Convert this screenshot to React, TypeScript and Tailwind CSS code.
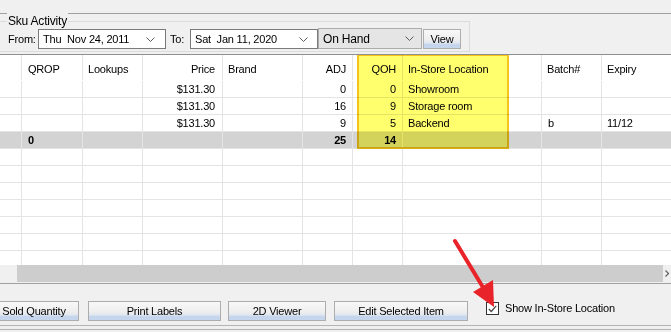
import React from "react";

type Row = {
  qrop?: string;
  price?: string;
  adj?: string;
  qoh?: string;
  loc?: string;
  batch?: string;
  expiry?: string;
  total?: boolean;
};

const rows: Row[] = [
  { price: "$131.30", adj: "0", qoh: "0", loc: "Showroom" },
  { price: "$131.30", adj: "16", qoh: "9", loc: "Storage room" },
  { price: "$131.30", adj: "9", qoh: "5", loc: "Backend", batch: "b", expiry: "11/12" },
  { qrop: "0", adj: "25", qoh: "14", total: true },
  {},
  {},
  {},
  {},
  {},
  {},
  {},
];

const cell = "h-full border-r border-[#e4e4e4] shrink-0 whitespace-nowrap overflow-hidden";

function Chevron({ className }: { className?: string }) {
  return (
    <svg width="9" height="5" viewBox="0 0 9 5" className={className}>
      <path d="M0.5 0.5 L4.5 4.5 L8.5 0.5" fill="none" stroke="#5a5a5a" strokeWidth="1" />
    </svg>
  );
}

function WinButton({ label, width }: { label: string; width: string }) {
  return (
    <div
      className={`${width} h-[20px] shrink-0 border border-[#adadad] flex items-center justify-center bg-[linear-gradient(to_bottom,#f8f8f8_0%,#efefef_50%,#e3e8ef_70%,#c3d4ec_82%,#c6d6ed_100%)]`}
    >
      {label}
    </div>
  );
}

export default function App() {
  return (
    <div className="relative w-[671px] h-[332px] overflow-hidden bg-[#f0f0f0] text-black text-[11px] tracking-[-0.2px] font-['Liberation_Sans',Arial,sans-serif]">
      {/* top strip */}
      <div className="h-[13px]" />
      <div className="h-px bg-[#a0a0a0]" />
      <div className="h-[7px]" />

      {/* Sku Activity group */}
      <div className="relative ml-[-1px] w-[471px] h-[31px] border border-[#dcdcdc]">
        <span className="absolute left-[7px] top-[-9px] px-[1px] bg-[#f0f0f0] text-[12px] leading-[16px]">
          Sku Activity
        </span>
        <div className="flex items-start pt-[7px] pl-[8px]">
          <span className="w-[30px] leading-[20px]">From:</span>
          <div className="w-[128px] h-[20px] bg-white border border-[#7a7a7a] flex items-center pl-[4px] pr-[10px]">
            <span className="flex-1 whitespace-pre">Thu  Nov 24, 2011</span>
            <Chevron />
          </div>
          <span className="w-[24px] pl-[4px] leading-[20px]">To:</span>
          <div className="w-[128px] h-[20px] bg-white border border-[#7a7a7a] flex items-center pl-[4px] pr-[9px]">
            <span className="flex-1 whitespace-pre">Sat  Jan 11, 2020</span>
            <Chevron />
          </div>
          <div className="mt-[-1px] w-[104px] h-[21px] bg-[#e5e5e5] border border-[#acacac] flex items-center pl-[4px] pr-[7px] text-[12px]">
            <span className="flex-1">On Hand</span>
            <Chevron />
          </div>
          <div className="ml-[1px]">
            <WinButton label="View" width="w-[38px]" />
          </div>
        </div>
      </div>
      <div className="h-[2px]" />

      {/* grid */}
      <div className="relative border-t border-[#8f8f8f] bg-white h-[211px] overflow-hidden">
        <div className="flex h-[26px] border-b border-transparent">
          <div className={`${cell} w-[22px]`} />
          <div className={`${cell} w-[61px] pl-[6px] pt-[6px]`}>QROP</div>
          <div className={`${cell} w-[60px] pl-[5px] pt-[6px]`}>Lookups</div>
          <div className={`${cell} w-[80px] pr-[7px] pt-[6px] text-right`}>Price</div>
          <div className={`${cell} w-[80px] pl-[5px] pt-[6px]`}>Brand</div>
          <div className={`${cell} w-[50px] pr-[6px] pt-[6px] text-right`}>ADJ</div>
          <div className={`${cell} w-[50px] pr-[6px] pt-[6px] text-right`}>QOH</div>
          <div className={`${cell} w-[139px] pl-[5px] pt-[6px]`}>In-Store Location</div>
          <div className={`${cell} w-[60px] pl-[5px] pt-[6px]`}>Batch#</div>
          <div className={`${cell} flex-1 pl-[5px] pt-[6px] border-r-0`}>Expiry</div>
        </div>
        {rows.map((r, i) => (
          <div
            key={i}
            className={`flex h-[17px] border-b border-[#e4e4e4] leading-[16px] ${
              r.total ? "bg-[#d3d3d3] font-bold" : ""
            }`}
          >
            <div className={`${cell} w-[22px]`} />
            <div className={`${cell} w-[61px] pl-[6px]`}>{r.qrop}</div>
            <div className={`${cell} w-[60px]`} />
            <div className={`${cell} w-[80px] pr-[7px] text-right`}>{r.price}</div>
            <div className={`${cell} w-[80px]`} />
            <div className={`${cell} w-[50px] pr-[6px] text-right`}>{r.adj}</div>
            <div className={`${cell} w-[50px] pr-[6px] text-right`}>{r.qoh}</div>
            <div className={`${cell} w-[139px] pl-[5px]`}>{r.loc}</div>
            <div className={`${cell} w-[60px] pl-[6px]`}>{r.batch}</div>
            <div className={`${cell} flex-1 pl-[5px] border-r-0`}>{r.expiry}</div>
          </div>
        ))}

        {/* highlight */}
        <div className="absolute left-[357px] top-[-1px] w-[152px] h-[95px] border-2 border-[#f4c41a] bg-[#ffff6e] mix-blend-multiply" />
      </div>

      {/* horizontal scrollbar */}
      <div className="flex h-[17px] bg-[#f0f0f0]">
        <div className="w-[17px]" />
        <div className="flex-1 bg-[#cdcdcd]" />
        <div className="w-[8px] flex items-center pl-[2px]">
          <svg width="6" height="7" viewBox="0 0 6 7">
            <path d="M0.5 0.5 L3.5 3.5 L0.5 6.5" fill="none" stroke="#606060" strokeWidth="1.2" />
          </svg>
        </div>
      </div>
      <div className="h-px" />
      <div className="h-px bg-[#a0a0a0]" />

      {/* bottom panel */}
      <div className="h-[41px] pt-[17px] flex items-start">
        <div className="flex gap-[7px] ml-[-11px]">
          <WinButton label="Sold Quantity" width="w-[90px]" />
          <div className="ml-[2px]">
            <WinButton label="Print Labels" width="w-[133px]" />
          </div>
          <WinButton label="2D Viewer" width="w-[98px]" />
          <div className="ml-[1px]">
            <WinButton label="Edit Selected Item" width="w-[134px]" />
          </div>
        </div>
        <div className="ml-[18px] mt-[1px] flex items-center gap-[6px]">
          <div className="w-[13px] h-[13px] bg-white border border-[#333333] flex items-center justify-center">
            <svg width="9" height="8" viewBox="0 0 9 8">
              <path d="M0.8 4 L3.3 6.5 L8.2 0.8" fill="none" stroke="#4a4a4a" strokeWidth="1.3" />
            </svg>
          </div>
          <span className="leading-[13px]">Show In-Store Location</span>
        </div>
      </div>
      <div className="h-px bg-[#b4b4b4]" />
      <div className="h-[3px]" />
      <div className="h-px bg-[#b4b4b4]" />

      {/* red annotation arrow */}
      <svg className="absolute left-0 top-0 pointer-events-none" width="671" height="332">
        <line x1="455" y1="241" x2="484" y2="289" stroke="#e8232a" strokeWidth="4" strokeLinecap="round" />
        <polygon points="494,307 473,292 493,280" fill="#e8232a" />
      </svg>
    </div>
  );
}
